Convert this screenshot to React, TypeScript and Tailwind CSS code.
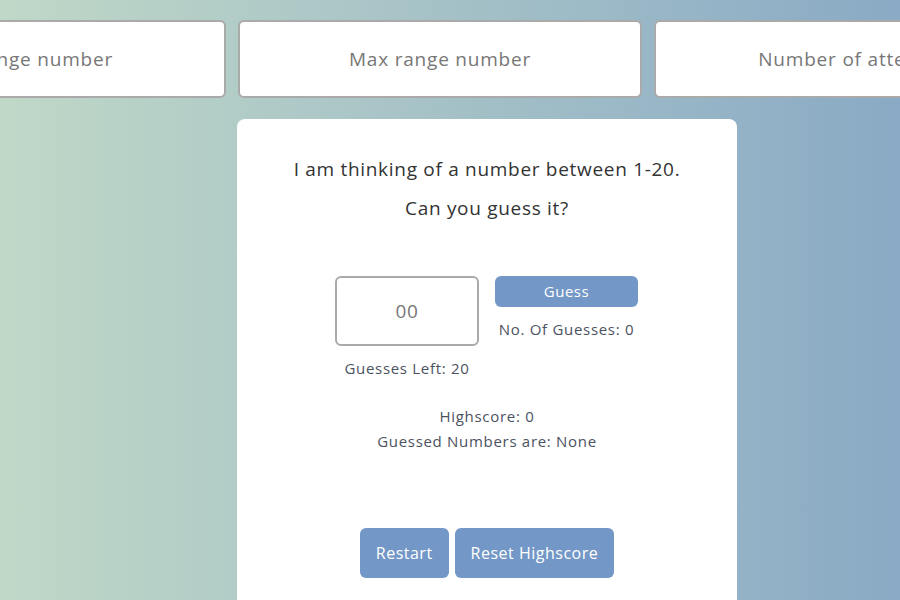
import React, { useState } from 'react';

const font = { fontFamily: '"Open Sans", "Liberation Sans", sans-serif' };

const App: React.FC = () => {
  const [guess, setGuess] = useState('');

  return (
    <div
      className="w-[900px] h-[600px] overflow-hidden bg-gradient-to-r from-[#c0d8c7] to-[#8aaac5]"
      style={font}
    >
      {/* range settings */}
      <div className="flex justify-center gap-3 pt-5 pr-5">
        <input
          className="shrink-0 w-[404px] h-[78px] bg-white border-2 border-[#aaaaaa] rounded-md text-center text-[19px] tracking-[0.8px] text-[#555] placeholder:text-[#777] outline-none"
          placeholder="Min range number"
        />
        <input
          className="shrink-0 w-[404px] h-[78px] bg-white border-2 border-[#aaaaaa] rounded-md text-center text-[19px] tracking-[0.8px] text-[#555] placeholder:text-[#777] outline-none"
          placeholder="Max range number"
        />
        <input
          className="shrink-0 w-[404px] h-[78px] bg-white border-2 border-[#aaaaaa] rounded-md text-center text-[19px] tracking-[0.8px] text-[#555] placeholder:text-[#777] outline-none"
          placeholder="Number of attempts"
        />
      </div>

      {/* game card */}
      <div className="ml-[237px] mt-[21px] w-[500px] h-[500px] bg-white rounded-lg flex flex-col items-center pt-[36px] tracking-[0.7px]">
        <p className="text-[19px] text-[#333] leading-[28px]">I am thinking of a number between 1-20.</p>
        <p className="text-[19px] text-[#333] leading-[28px] mt-[11px]">Can you guess it?</p>

        <div className="flex gap-4 mt-[54px] -ml-[1px]">
          <div className="flex flex-col items-center">
            <input
              value={guess}
              onChange={e => setGuess(e.target.value)}
              placeholder="00"
              className="w-[144px] h-[70px] border-2 border-[#aaaaaa] rounded-md text-center text-[19px] text-[#555] placeholder:text-[#777] outline-none"
            />
            <span className="mt-[11px] text-[15px] text-[#4b5261]">Guesses Left: 20</span>
          </div>
          <div className="flex flex-col items-center">
            <button className="w-[143px] h-[31px] bg-[#7397c6] rounded-md text-white text-[15px] tracking-[0.5px]">Guess</button>
            <span className="mt-[11px] text-[15px] text-[#4b5261]">No. Of Guesses: 0</span>
          </div>
        </div>

        <div className="mt-[24px] flex flex-col items-center text-[15px] text-[#4b5261] leading-[25px]">
          <span>Highscore: 0</span>
          <span>Guessed Numbers are: None</span>
        </div>

        <div className="flex gap-[6px] mt-[74px] tracking-[0.5px]">
          <button className="h-[50px] px-4 bg-[#7397c6] rounded-md text-white text-[16px]">Restart</button>
          <button className="h-[50px] px-4 bg-[#7397c6] rounded-md text-white text-[16px]">Reset Highscore</button>
        </div>
      </div>
    </div>
  );
};

export default App;
